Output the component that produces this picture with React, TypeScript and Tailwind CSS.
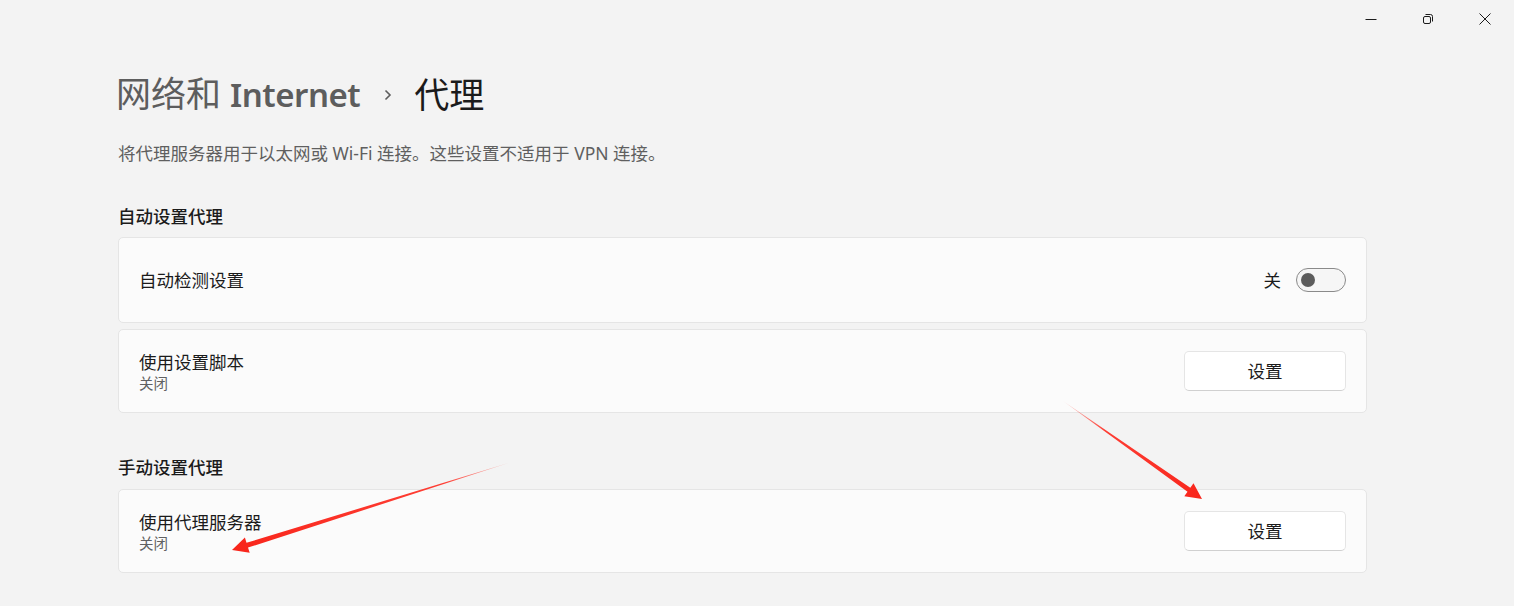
import React from 'react';

const font = { fontFamily: '"Segoe UI", "Noto Sans", "Noto Sans CJK SC", sans-serif' };

const Toggle: React.FC = () => (
  <div className="w-[50px] h-[24px] rounded-full border border-[#8a8a8a] bg-[#f6f6f6] flex items-center px-[4px]">
    <div className="w-[14px] h-[14px] rounded-full bg-[#5c5c5c]" />
  </div>
);

const SetButton: React.FC = () => (
  <button className="w-[162px] h-[40px] rounded-[5px] bg-white border border-[#e5e5e5] border-b-[#d0d0d0] text-[17.5px] text-[#1b1b1b]">
    设置
  </button>
);

const Card: React.FC<{ title: string; sub?: string; right: React.ReactNode; h: string }> = ({ title, sub, right, h }) => (
  <div className={`${h} rounded-[5px] border border-[#e5e5e5] bg-[#fbfbfb] flex items-center justify-between pl-[20px] pr-[20px]`}>
    <div className="flex flex-col">
      <span className="text-[17.5px] leading-[24px] text-[#1b1b1b]">{title}</span>
      {sub && <span className="text-[14.5px] leading-[18px] text-[#616161]">{sub}</span>}
    </div>
    {right}
  </div>
);

const Arrows: React.FC = () => (
  <svg className="absolute left-0 top-0 pointer-events-none" width="1514" height="606">
    <defs>
      <linearGradient id="g1" x1="515" y1="461" x2="232" y2="550" gradientUnits="userSpaceOnUse">
        <stop offset="0" stopColor="#ff2a1f" stopOpacity="0.15" />
        <stop offset="0.25" stopColor="#ff2a1f" stopOpacity="0.9" />
        <stop offset="1" stopColor="#f8251b" />
      </linearGradient>
      <linearGradient id="g2" x1="1063" y1="401" x2="1202" y2="499" gradientUnits="userSpaceOnUse">
        <stop offset="0" stopColor="#ff2a1f" stopOpacity="0.15" />
        <stop offset="0.3" stopColor="#ff2a1f" stopOpacity="0.9" />
        <stop offset="1" stopColor="#f8251b" />
      </linearGradient>
    </defs>
    <polygon
      fill="url(#g1)"
      points="515,461 246.5,542.8 244.9,537.6 232,550 249.7,552.8 248,547.6"
    />
    <polygon
      fill="url(#g2)"
      points="1063,401 1190.3,487.8 1193.5,483.3 1202,499 1184.3,496.3 1187.5,491.8"
    />
  </svg>
);

const App: React.FC = () => {
  return (
    <div className="relative w-[1514px] h-[606px] bg-[#f3f3f3] overflow-hidden" style={font}>
      {/* title bar */}
      <div className="flex justify-end h-[38px] pr-[1px]">
        <div className="w-[57px] flex items-center justify-center">
          <svg width="12" height="12" viewBox="0 0 12 12">
            <line x1="0.5" y1="6.5" x2="11.5" y2="6.5" stroke="#1b1b1b" strokeWidth="1" />
          </svg>
        </div>
        <div className="w-[57px] flex items-center justify-center">
          <svg width="12" height="12" viewBox="0 0 12 12" fill="none" stroke="#1b1b1b" strokeWidth="1">
            <rect x="1.5" y="3.5" width="7" height="7" rx="1.5" />
            <path d="M3.5 1.5h5a2 2 0 0 1 2 2v5" />
          </svg>
        </div>
        <div className="w-[57px] flex items-center justify-center">
          <svg width="12" height="12" viewBox="0 0 12 12" stroke="#1b1b1b" strokeWidth="1">
            <line x1="0.5" y1="0.5" x2="11.5" y2="11.5" />
            <line x1="11.5" y1="0.5" x2="0.5" y2="11.5" />
          </svg>
        </div>
      </div>

      <div className="pl-[118px] w-[1367px]">
        <h1 className="mt-[32px] -ml-[2px] flex items-center leading-[48px] text-[35px] font-normal">
          <span className="text-[#5d5d5d]">
            网络和 <span className="font-semibold text-[33px] tracking-[-0.5px]">Internet</span>
          </span>
          <svg className="ml-[22px] mr-[20px]" width="12" height="14" viewBox="0 0 12 14">
            <path d="M3.5 2.5 L8 7 L3.5 11.5" fill="none" stroke="#5d5d5d" strokeWidth="1.6" />
          </svg>
          <span className="text-[#1b1b1b]">代理</span>
        </h1>
        <p className="mt-[22px] text-[17.5px] leading-[24px] text-[#5f5f5f]">
          将代理服务器用于以太网或 Wi-Fi 连接。这些设置不适用于 VPN 连接。
        </p>

        <h2 className="mt-[39px] text-[17.5px] leading-[24px] font-medium text-[#1b1b1b]">自动设置代理</h2>
        <div className="mt-[9px] flex flex-col gap-[6px]">
          <Card
            title="自动检测设置"
            h="h-[86px]"
            right={
              <div className="flex items-center gap-[15px] pr-[0px]">
                <span className="text-[17.5px] text-[#1b1b1b]">关</span>
                <Toggle />
              </div>
            }
          />
          <Card title="使用设置脚本" sub="关闭" h="h-[84px]" right={<SetButton />} />
        </div>

        <h2 className="mt-[42px] text-[17.5px] leading-[24px] font-medium text-[#1b1b1b]">手动设置代理</h2>
        <div className="mt-[10px]">
          <Card title="使用代理服务器" sub="关闭" h="h-[84px]" right={<SetButton />} />
        </div>
      </div>

      <Arrows />
    </div>
  );
};

export default App;
